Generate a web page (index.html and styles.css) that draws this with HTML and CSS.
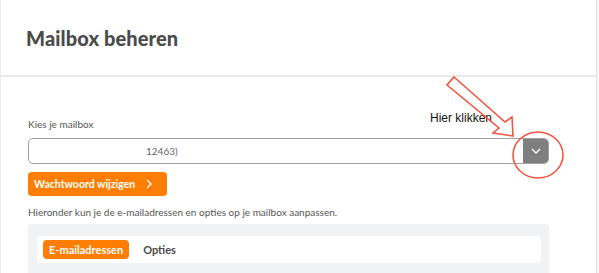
FILE: index.html
```html
<!DOCTYPE html>
<html lang="nl">
<head>
  <meta charset="UTF-8" />
  <meta name="viewport" content="width=device-width, initial-scale=1" />
  <title>Mailbox beheren</title>
  <link rel="stylesheet" href="styles.css">
</head>
<body>
  <div class="card">
    <!-- header -->
    <div class="card-head">
      <h1>Mailbox beheren</h1>
    </div>

    <!-- content -->
    <div class="card-body">
      <label class="label">Kies je mailbox</label>
      <div class="select">
        <span class="select-value">12463)</span>
        <span class="select-btn">
          <svg width="10" height="6" viewBox="0 0 10 6"><path d="M1 1l4 4 4-4" fill="none" stroke="#fff" stroke-width="1.3" /></svg>
        </span>
      </div>

      <a href="#" class="btn-orange">Wachtwoord wijzigen <span class="chev">
        <svg width="6" height="10" viewBox="0 0 6 10"><path d="M1 1l4 4-4 4" fill="none" stroke="#fff" stroke-width="1.4" /></svg>
      </span></a>

      <p class="help">Hieronder kun je de e-mailadressen en opties op je mailbox aanpassen.</p>

      <div class="panel">
        <div class="tabs">
          <span class="tab active">E-mailadressen</span>
          <span class="tab">Opties</span>
        </div>
      </div>
    </div>

    <!-- annotation over the screenshot -->
    <span class="note">Hier klikken</span>
    <svg class="marks" width="599" height="273" viewBox="0 0 599 273">
      <polygon points="454,77 505,122 512,117 513,136 493,133 499,128 447,85" fill="none" stroke="#f2553f" stroke-width="1.6" stroke-linejoin="miter" />
      <ellipse cx="538" cy="155" rx="25" ry="23" fill="none" stroke="#f2553f" stroke-width="1.6" />
    </svg>
  </div>
</body>
</html>
```

FILE: styles.css
```css
body {
  margin: 0;
  background-color: #f6f6f6;
  font-family: Lato, "Noto Sans", sans-serif;
  color: #555;
}

/* main card */
.card {
  position: relative;
  width: 595px;
  height: 273px;
  background-color: #fff;
  border-left: 1px solid #ececec;
  border-right: 1px solid #e2e2e2;
  overflow: hidden;
}

.card-head {
  height: 77px;
  padding-left: 25px;
  border-bottom: 2px solid #e9e9e9;
  box-sizing: border-box;
  display: flex;
  align-items: center;
}

h1 {
  margin: 0;
  font-size: 20px;
  font-weight: 900;
  color: #4b4b4b;
  letter-spacing: 0.1px;
}

.card-body {
  padding: 41px 0 0 27px;
  width: 521px;
}

.label {
  display: block;
  font-size: 10px;
  line-height: 12px;
  margin-bottom: 8px;
}

/* select box */
.select {
  height: 26px;
  border: 1px solid #a0a0a0;
  border-radius: 5px;
  display: flex;
  align-items: center;
  justify-content: space-between;
  box-sizing: border-box;
}

.select-value {
  padding-left: 117px;
  font-size: 10px;
  color: #666;
}

.select-btn {
  width: 25px;
  height: 24px;
  background-color: #7f7f7f;
  border-radius: 0 4px 4px 0;
  display: flex;
  align-items: center;
  justify-content: center;
}

/* orange button */
.btn-orange {
  display: inline-flex;
  align-items: center;
  gap: 11px;
  margin-top: 8px;
  height: 24px;
  padding: 0 15px 0 6px;
  background-color: #ff7d00;
  color: #fff;
  border-radius: 4px;
  font-size: 10.5px;
  font-weight: 700;
  text-decoration: none;
}

.chev {
  display: flex;
}

.help {
  margin: 10px 0 0;
  font-size: 10px;
  line-height: 12px;
}

/* tabs panel */
.panel {
  margin-top: 6px;
  height: 60px;
  padding: 12px 8px 0 9px;
  background-color: #f1f2f4;
  border-radius: 4px 4px 0 0;
}

.tabs {
  height: 27px;
  background-color: #fff;
  border-radius: 4px;
  display: flex;
  align-items: center;
  gap: 14px;
  padding-left: 6px;
}

.tab {
  font-size: 11px;
  font-weight: 700;
  color: #4b4b4b;
}

.tab.active {
  background-color: #ff7d00;
  color: #fff;
  padding: 3px 6px;
  border-radius: 4px;
}

/* red annotation drawn on top */
.note {
  position: absolute;
  left: 429px;
  top: 111px;
  font-family: "Liberation Sans", Arial, sans-serif;
  font-size: 12px;
  color: #111;
}

.marks {
  position: absolute;
  left: -1px;
  top: 0;
  pointer-events: none;
}
```
